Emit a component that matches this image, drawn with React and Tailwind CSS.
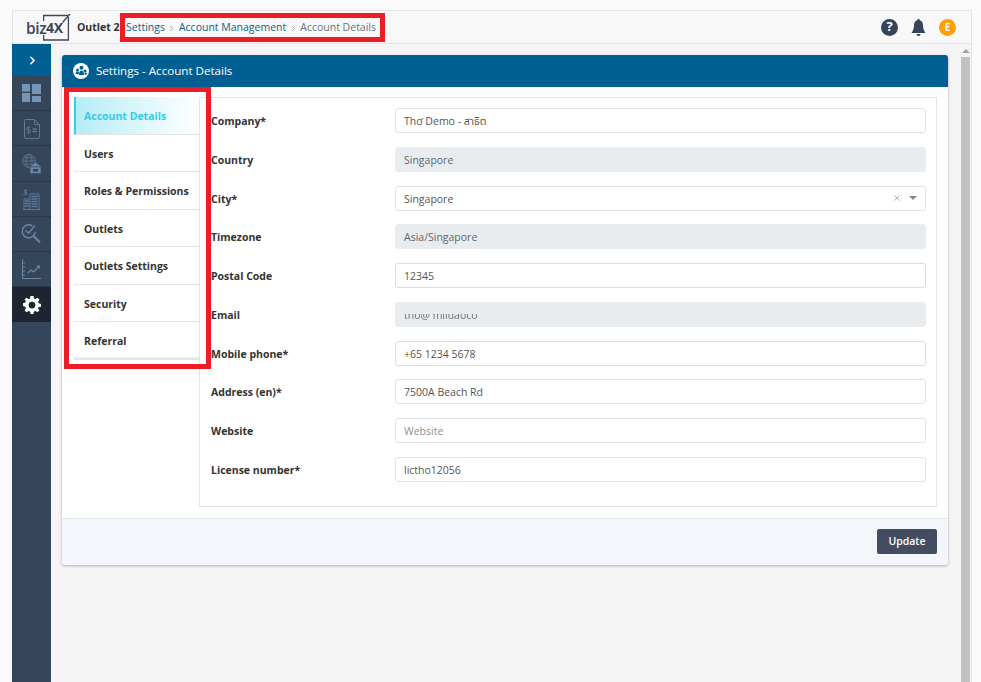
import React from "react";
import { ChevronRight, X } from "lucide-react";

const font = { fontFamily: '"Open Sans","Noto Sans","Noto Sans Thai",sans-serif' };

const C = "#6a85a3";
const D = "#35455a";

function Dash() {
  return (
    <svg width="19" height="18" viewBox="0 0 19 18" fill="#7595b6">
      <rect x="0" y="0" width="8" height="7.500" />
      <rect x="10" y="0" width="9" height="10" />
      <rect x="0" y="9" width="8" height="9" />
      <rect x="10" y="12" width="9" height="6" />
    </svg>
  );
}
function Doc() {
  return (
    <svg className="mt-[2px]" width="16" height="20" viewBox="0 0 16 20" fill="none" stroke="#5f7894" strokeWidth="1">
      <path d="M1 .5h9.500l5 5V18a1.500 1.500 0 0 1-1.500 1.500H2A1.500 1.500 0 0 1 .5 18V2A1.500 1.500 0 0 1 1 .5z" />
      <path d="M10.500 .5v5h5" />
      <path d="M6 8.500H4a1.200 1.200 0 0 0 0 2.700h1a1.200 1.200 0 0 1 0 2.700H3M4.500 7.500v7.500" strokeWidth="0.9" />
      <path d="M8.500 10h4.500M8.500 12.500h4.500" strokeWidth="1.300" />
    </svg>
  );
}
function Globe() {
  return (
    <svg className="mt-[1px]" width="20" height="20" viewBox="0 0 20 20" fill="none" stroke="#5f7894" strokeWidth="0.9">
      <circle cx="7" cy="7" r="6.500" />
      <ellipse cx="7" cy="7" rx="3" ry="6.500" />
      <path d="M.5 7h13M1.500 3.800h11M1.500 10.200h11" />
      <path d="M7 13l6.500-5 6.500 5z" fill={C} stroke={D} strokeWidth="0.7" />
      <path d="M8 13h11v6.500H8z" fill={C} stroke={D} strokeWidth="0.5" />
      <rect x="11" y="15" width="5" height="2.500" fill={D} stroke="none" />
    </svg>
  );
}
function Building() {
  return (
    <svg width="17" height="22" viewBox="0 0 17 22" fill="none" stroke="#5f7894" strokeWidth="1">
      <path d="M2.500 1v6M4.500 2.500H2a1 1 0 0 0 0 2h1a1 1 0 0 1 0 2H.5" strokeWidth="0.9" />
      <path d="M1 21v-10h6M7 21V6h9v15M0 21.500h17" />
      <path d="M2 13h4M2 15.500h4M2 18h4M8.500 8.500h6M8.500 11h6M8.500 13.500h6M8.500 16h6M8.500 18.500h6" strokeWidth="1.300" />
    </svg>
  );
}
function Search() {
  return (
    <svg width="19" height="19" viewBox="0 0 19 19" fill="none" stroke={C} strokeWidth="1.500">
      <path d="M10.500 2A6.500 6.500 0 1 0 13.200 8" />
      <path d="M3.800 6.500l2.700 2.700L13 1.500" />
      <path d="M11.500 12l6.500 6.500" strokeWidth="2" />
    </svg>
  );
}
function ChartI() {
  return (
    <svg width="19" height="20" viewBox="0 0 19 20" fill="none" stroke={C} strokeWidth="1.100">
      <path d="M.5 0v19.500H19" />
      <path d="M.5 4h2.500M.5 8h2.500M.5 12h2.500M.5 16h2.500" />
      <path d="M6 14l3-3 2.500 2L17 7.500" strokeWidth="1.300" />
      <path d="M14 6.500h4V10z" fill={C} stroke="none" />
    </svg>
  );
}
function Gear() {
  return (
    <svg width="18" height="18" viewBox="0 0 24 24" fill="#fff">
      <path fillRule="evenodd" d="M10 0h4l.6 3.200 2 .9L19.400 2.200 22 5l-1.900 2.800.8 2 3.100.7v3.900l-3.100.7-.8 2L22 19l-2.600 2.800-2.800-1.900-2 .9L14 24h-4l-.6-3.200-2-.9-2.800 1.900L2 19l1.900-2.800-.8-2L0 13.400v-3.900l3.100-.7.8-2L2 5l2.600-2.800 2.800 1.900 2-.9zM12 7.500a4.500 4.500 0 1 0 0 9 4.500 4.500 0 0 0 0-9z" />
    </svg>
  );
}

function Logo() {
  return (
    <div className="relative ml-[13px] flex h-[27px] w-[45px] items-center">
      <span className="relative top-[2px] text-[15.5px] font-semibold leading-none tracking-[-0.4px] text-[#3b4759]" style={{ fontFamily: '"Open Sans",sans-serif' }}>biz</span>
      <svg className="absolute left-[17px] top-0" width="28" height="27" viewBox="0 0 28 27" fill="none" stroke="#3b4759" strokeWidth="1.300">
        <path d="M.6 7V1.500h24.800M25.400 3v23H.6v-5" />
        <path d="M27 0L19.500 8.500" />
      </svg>
      <span className="absolute left-[20px] top-[7px] text-[14px] font-bold leading-none tracking-[-0.3px] text-[#3b4759]" style={{ fontFamily: '"Open Sans",sans-serif' }}>4X</span>
    </div>
  );
}

const tabs = ["Account Details", "Users", "Roles & Permissions", "Outlets", "Outlets Settings", "Security", "Referral"];

function Field({ label, value, placeholder, disabled, focused, select, blurred }) {
  return (
    <div className="flex h-[25px] items-center">
      <div className="w-[184px] pt-[3px] text-[10.5px] font-bold text-[#333]">{label}</div>
      <div
        className={
          "flex h-[25px] flex-1 items-center rounded-[3px] border pl-[8px] pr-[8px] text-[10.5px] " +
          (disabled
            ? "border-[#e9ecef] bg-[#e9ecef] text-[#5f6770]"
            : focused
            ? "border-[#cfe0ea] bg-white text-[#555]"
            : "border-[#dfe2e6] bg-white text-[#555]")
        }
      >
        {blurred ? (
          <span className="relative pt-[3px] text-[#69717a] blur-[0.6px]">
            {value}
            <span className="absolute inset-x-0 top-0 h-[9px] bg-[#e9ecef]" />
          </span>
        ) : placeholder ? (
          <span className="pt-[3px] text-[#8a9097]">{placeholder}</span>
        ) : (
          <span className="flex-1 pt-[3px]">{value}</span>
        )}
        {select && (
          <div className="flex items-center gap-[7px]">
            <X size={10} strokeWidth={1.6} color="#8a8a8a" />
            <span className="h-0 w-0 border-x-[4px] border-t-[4px] border-x-transparent border-t-[#888]" />
          </div>
        )}
      </div>
    </div>
  );
}

export default function App() {
  return (
    <div className="relative h-[682px] w-[981px] overflow-hidden bg-[#fafafa] pl-[12px] pr-[9px] pt-[10px]" style={font}>
      <div className="flex h-[672px] flex-col border-r border-t border-[#e4e4e4]">
        <header className="flex h-[33px] shrink-0 items-center border-b border-l border-[#e2e2e2] bg-[#f8f8f8] pr-[15px]">
          <Logo />
          <span className="ml-[6px] w-[49px] whitespace-nowrap pt-[2px] text-[10.5px] font-bold text-[#333]">Outlet 2</span>
          <nav className="flex items-center whitespace-nowrap pt-[2px] text-[10.5px]">
            <span className="text-[#11618f]">Settings</span>
            <ChevronRight size={9} color="#888" className="mx-[2.5px]" />
            <span className="text-[#11618f]">Account Management</span>
            <ChevronRight size={9} color="#888" className="mx-[2.5px]" />
            <span className="text-[#6d757d]">Account Details</span>
          </nav>
          <div className="ml-auto flex items-center gap-[13px]">
            <div className="flex h-[17px] w-[17px] items-center justify-center rounded-full bg-[#35445a] text-[13px] font-bold text-white">?</div>
            <svg width="15" height="17" viewBox="0 0 15 17" fill="#35445a">
              <path d="M7.500 0c.8 0 1.200.5 1.200 1.200C11 1.800 12 3.700 12 6c0 3 .6 5 2.500 8H.5C2.400 11 3 9 3 6c0-2.300 1-4.200 3.300-4.800C6.300.5 6.700 0 7.500 0z" />
              <path d="M5.500 15h4a2 2 0 0 1-4 0z" />
            </svg>
            <div className="flex h-[17px] w-[17px] items-center justify-center rounded-full bg-[#ff9e00] text-[10px] font-bold text-white">E</div>
          </div>
        </header>

        <div className="flex min-h-0 flex-1">
          <aside className="flex w-[39px] shrink-0 flex-col bg-[#35455a]">
            <div className="flex h-[32px] shrink-0 items-center justify-center bg-[#005f92] pl-[2px]">
              <ChevronRight size={13} strokeWidth={3} color="#fff" />
            </div>
            {[Dash, Doc, Globe, Building, Search, ChartI].map((I, i) => (
              <div key={i} className="flex h-[35.2px] shrink-0 items-center justify-center border-b border-[#2b3849]">
                <I />
              </div>
            ))}
            <div className="flex h-[35px] shrink-0 items-center justify-center bg-[#1e2530]">
              <Gear />
            </div>
          </aside>

          <main className="flex min-w-0 flex-1 bg-[#f5f5f5]">
            <div className="min-w-0 flex-1 pl-[11px] pr-[13px] pt-[11px]">
              <div className="rounded-[3px] bg-white shadow-[0_1px_3px_rgba(0,0,0,0.3)]">
                <div className="flex h-[32px] items-center gap-[7px] rounded-t-[3px] bg-[#005f92] pl-[11px] text-[11.6px] text-white">
                  <svg width="16" height="16" viewBox="0 0 16 16">
                    <circle cx="8" cy="8" r="8" fill="#fff" />
                    <circle cx="8.500" cy="4.800" r="2" fill="#005f92" />
                    <circle cx="4.500" cy="7" r="1.500" fill="#005f92" />
                    <circle cx="12" cy="8" r="1.500" fill="#005f92" />
                    <path d="M2.500 10.500c0-1.500 1-2 2-2s1.500.5 1.500 1l-.5 2z" fill="#005f92" />
                    <path d="M6 12c0-3 1-4.500 2.500-4.500S11 9 11 12z" fill="#005f92" />
                    <path d="M11.500 10c.5-.5 2.500-.5 3 1l-2.500 1z" fill="#005f92" />
                  </svg>
                  Settings - Account Details
                </div>
                <div className="flex h-[431px] pl-[12px] pr-[11px] pt-[10px]">
                  <div className="h-[263px] w-[126px] shrink-0 border-b-[3px] border-r border-[#eaeaea]">
                    {tabs.map((t, i) => (
                      <div
                        key={t}
                        className={
                          "flex h-[37.5px] items-center border-b border-[#e4e4e4] pt-[4px] text-[10.5px] font-bold " +
                          (i === 0
                            ? "border-l-2 border-l-[#38cde8] bg-gradient-to-r from-[#b5ecf5] to-white pl-[8px] text-[#35cbe6]"
                            : "pl-[10px] text-[#333]")
                        }
                      >
                        {t}
                      </div>
                    ))}
                  </div>
                  <div className="-ml-[1px] flex h-[410px] min-w-0 flex-1 flex-col gap-[13.75px] border border-[#e4e4e4] pl-[11px] pr-[10px] pt-[10px]">
                    <Field label="Company*" value="Thơ Demo - สาธิต" />
                    <Field label="Country" value="Singapore" disabled />
                    <Field label="City*" value="Singapore" select />
                    <Field label="Timezone" value="Asia/Singapore" disabled />
                    <Field label="Postal Code" value="12345" focused />
                    <Field label="Email" value="tho@ mildaoco" disabled blurred />
                    <Field label="Mobile phone*" value="+65 1234 5678" focused />
                    <Field label="Address (en)*" value="7500A Beach Rd" />
                    <Field label="Website" placeholder="Website" />
                    <Field label="License number*" value="lictho12056" />
                  </div>
                </div>
                <div className="flex h-[47px] items-start justify-end rounded-b-[3px] border-t border-[#e4e4e4] bg-[#f3f7fb] pr-[11px] pt-[10px]">
                  <button className="h-[25px] w-[60px] rounded-[2px] bg-[#434c60] pt-[1px] text-[10.5px] font-semibold text-white">Update</button>
                </div>
              </div>
            </div>
            <div className="relative w-[9px] shrink-0">
              <span className="absolute left-[1px] top-[5px] h-0 w-0 border-x-[4px] border-b-[4px] border-x-transparent border-b-[#a3a3a3]" />
              <div className="absolute inset-x-0 bottom-0 top-[13px] bg-[#c1c1c1]" />
            </div>
            <div className="w-[1px] shrink-0" />
          </main>
        </div>
      </div>

      <div className="pointer-events-none absolute left-[120px] top-[13px] h-[29px] w-[265px] border-[5px] border-[#ee1c25]" />
      <div className="pointer-events-none absolute left-[64px] top-[87px] h-[282px] w-[147px] border-[5px] border-[#ee1c25]" />
    </div>
  );
}
